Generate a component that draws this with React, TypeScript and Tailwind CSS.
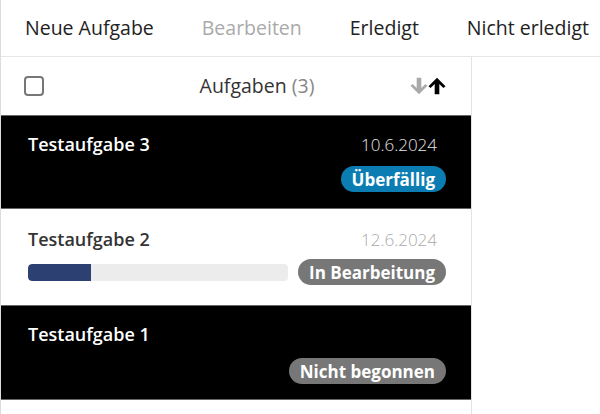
import React from "react";

function Badge({ children, color }: { children: React.ReactNode; color: string }) {
  return (
    <span
      className={`inline-flex items-center h-[26px] px-[11px] rounded-full text-white font-bold text-[17px] leading-none whitespace-nowrap ${color}`}
    >
      {children}
    </span>
  );
}

function SortArrow({ up, className }: { up?: boolean; className: string }) {
  return (
    <svg width="18" height="18" viewBox="0 0 14 14" className={className} style={{ transform: up ? undefined : "rotate(180deg)" }}>
      <path d="M7 0.5 L13.6 7.2 L12 8.6 L8.8 5.4 L8.8 13.5 L5.2 13.5 L5.2 5.4 L2 8.6 L0.4 7.2 Z" fill="currentColor" />
    </svg>
  );
}

export default function App() {
  return (
    <div className="w-[600px] h-[414px] overflow-hidden bg-white border-l border-[#dcdcdc] font-['Open_Sans',sans-serif] text-[#222]">
      <nav className="h-[57px] border-b border-[#e6e6e6] flex items-center text-[19.5px] whitespace-nowrap">
        <button className="shrink-0 px-6 text-[#222]">Neue Aufgabe</button>
        <button className="shrink-0 px-6 text-[#aaaaaa]">Bearbeiten</button>
        <button className="shrink-0 px-6 text-[#222]">Erledigt</button>
        <button className="shrink-0 px-6 text-[#222]">Nicht erledigt</button>
      </nav>
      <div className="w-[471px] h-[357px] border-r border-[#e3e3e3]">
        <div className="h-[58px] flex items-center pl-[23px] pr-[25px]">
          <div className="w-[20px] h-[20px] rounded-[4px] border-2 border-[#777]" />
          <div className="flex-1 text-center text-[19.5px] text-[#333] pl-[60px]">
            Aufgaben <span className="text-[#888]">(3)</span>
          </div>
          <div className="flex items-center">
            <SortArrow className="text-[#aaa]" />
            <SortArrow up className="text-black" />
          </div>
        </div>
        <div className="h-[94px] bg-black border-y border-[#666] pl-[27px] pr-[25px] pt-[15px] flex flex-col">
          <div className="flex justify-between items-baseline pr-[9px]">
            <span className="text-white font-semibold text-[18px]">Testaufgabe 3</span>
            <span className="text-[#e6e6e6] font-light text-[17px]">10.6.2024</span>
          </div>
          <div className="flex justify-end mt-[8px]">
            <Badge color="bg-[#0b7db3]">Überfällig</Badge>
          </div>
        </div>
        <div className="h-[96px] bg-white pl-[27px] pr-[25px] pt-[17px] flex flex-col">
          <div className="flex justify-between items-baseline pr-[9px]">
            <span className="text-[#333] font-semibold text-[18px]">Testaufgabe 2</span>
            <span className="text-[#aaa] font-light text-[17px]">12.6.2024</span>
          </div>
          <div className="flex items-center mt-[6px] gap-[10px]">
            <div className="flex-1 h-[17px] rounded-[4px] bg-[#ececec] overflow-hidden">
              <div className="h-full bg-[#2c4171] rounded-l-[4px]" style={{ width: "24.3%" }} />
            </div>
            <Badge color="bg-[#777]">In Bearbeitung</Badge>
          </div>
        </div>
        <div className="h-[95px] bg-black border-y border-[#666] pl-[27px] pr-[25px] pt-[15px] flex flex-col">
          <div className="flex justify-between items-baseline">
            <span className="text-white font-semibold text-[18px]">Testaufgabe 1</span>
          </div>
          <div className="flex justify-end mt-[10px]">
            <Badge color="bg-[#777]">Nicht begonnen</Badge>
          </div>
        </div>
      </div>
    </div>
  );
}
